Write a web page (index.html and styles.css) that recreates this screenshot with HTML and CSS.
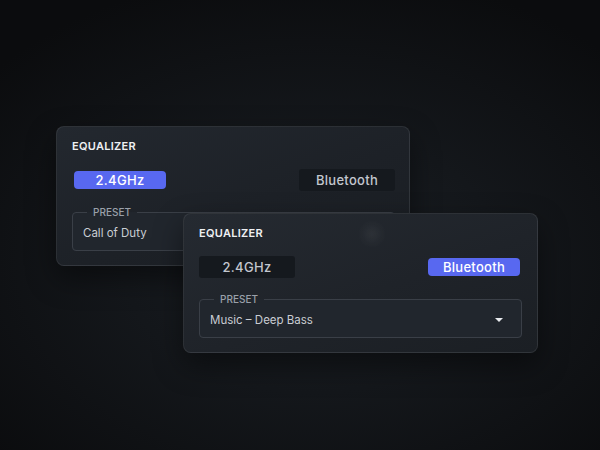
FILE: index.html
```html
<!DOCTYPE html>
<html>
<head>
<meta charset="utf-8">
<link rel="stylesheet" href="styles.css">
</head>
<body>
<div class="stage">
  <section class="card card-back">
    <h2 class="title">EQUALIZER</h2>
    <div class="toggle-row">
      <div class="slot"><button class="btn active">2.4GHz</button></div>
      <div class="slot"><button class="btn">Bluetooth</button></div>
    </div>
    <fieldset class="preset">
      <legend>PRESET</legend>
      <div class="select"><span>Call of Duty</span><i class="caret"></i></div>
    </fieldset>
  </section>
  <section class="card card-front">
    <h2 class="title">EQUALIZER</h2>
    <div class="toggle-row">
      <div class="slot"><button class="btn">2.4GHz</button></div>
      <div class="slot"><button class="btn active">Bluetooth</button></div>
    </div>
    <fieldset class="preset">
      <legend>PRESET</legend>
      <div class="select"><span>Music – Deep Bass</span><i class="caret"></i></div>
    </fieldset>
  </section>
</div>
</body>
</html>
```
FILE: styles.css
```css
* { box-sizing: border-box; }
html, body { margin: 0; height: 100%; }
body {
  font-family: Inter, "Noto Sans", sans-serif;
  background: radial-gradient(ellipse 70% 65% at 52% 58%, #1b1f24 0%, #14171b 45%, #0b0c0e 100%);
  overflow: hidden;
}
.stage { position: relative; width: 600px; height: 450px; }
.card {
  position: absolute;
  width: 355px;
  height: 140px;
  padding: 13px 14px 15px 15px;
  border-radius: 8px;
  border: 1px solid rgba(255,255,255,0.08);
  background: linear-gradient(160deg, #23282f 0%, #1d2127 55%, #1a1e23 100%);
  box-shadow: 0 12px 30px rgba(0,0,0,0.45);
  display: flex;
  flex-direction: column;
}
.card-back { left: 56px; top: 126px; width: 354px; }
.card-front {
  left: 183px; top: 213px;
  padding-right: 15px;
  background:
    radial-gradient(circle 14px at 188px 20px, rgba(255,255,255,0.05), rgba(255,255,255,0) 100%),
    linear-gradient(160deg, #252a31 0%, #1f2329 55%, #1b1f24 100%);
}
.title {
  margin: 0;
  font-size: 11px;
  line-height: 13px;
  font-weight: 600;
  letter-spacing: 0.3px;
  color: #eef0f3;
}
.toggle-row {
  margin-top: 16px;
  display: flex;
  justify-content: space-between;
  height: 22px;
}
.slot { width: 96px; height: 22px; display: flex; }
.btn {
  flex: 1;
  border: 0;
  border-radius: 3px;
  background: #15191e;
  color: #c3c7ce;
  font-family: inherit;
  font-size: 13px;
  font-weight: 500;
  letter-spacing: 0.3px;
  padding: 0;
}
.btn.active {
  margin: 2px;
  background: #5868f0;
  color: #ffffff;
  border-radius: 4px;
}
.preset {
  margin: 15px 0 0 0;
  padding: 0 9px 2px 10px;
  border: 1px solid #3a3f47;
  border-radius: 4px;
  background: #21262d;
  min-width: 0;
}
.preset legend {
  margin-left: 4px;
  padding: 0 6px;
  font-size: 10px;
  line-height: 12px;
  font-weight: 500;
  color: #9aa0a9;
}
.select {
  height: 30px;
  display: flex;
  align-items: center;
  justify-content: space-between;
  font-size: 11.5px;
  color: #c9cdd3;
}
.caret {
  width: 0; height: 0;
  border-left: 4px solid transparent;
  border-right: 4px solid transparent;
  border-top: 4px solid #e8eaee;
  margin-right: 9px;
}
```
